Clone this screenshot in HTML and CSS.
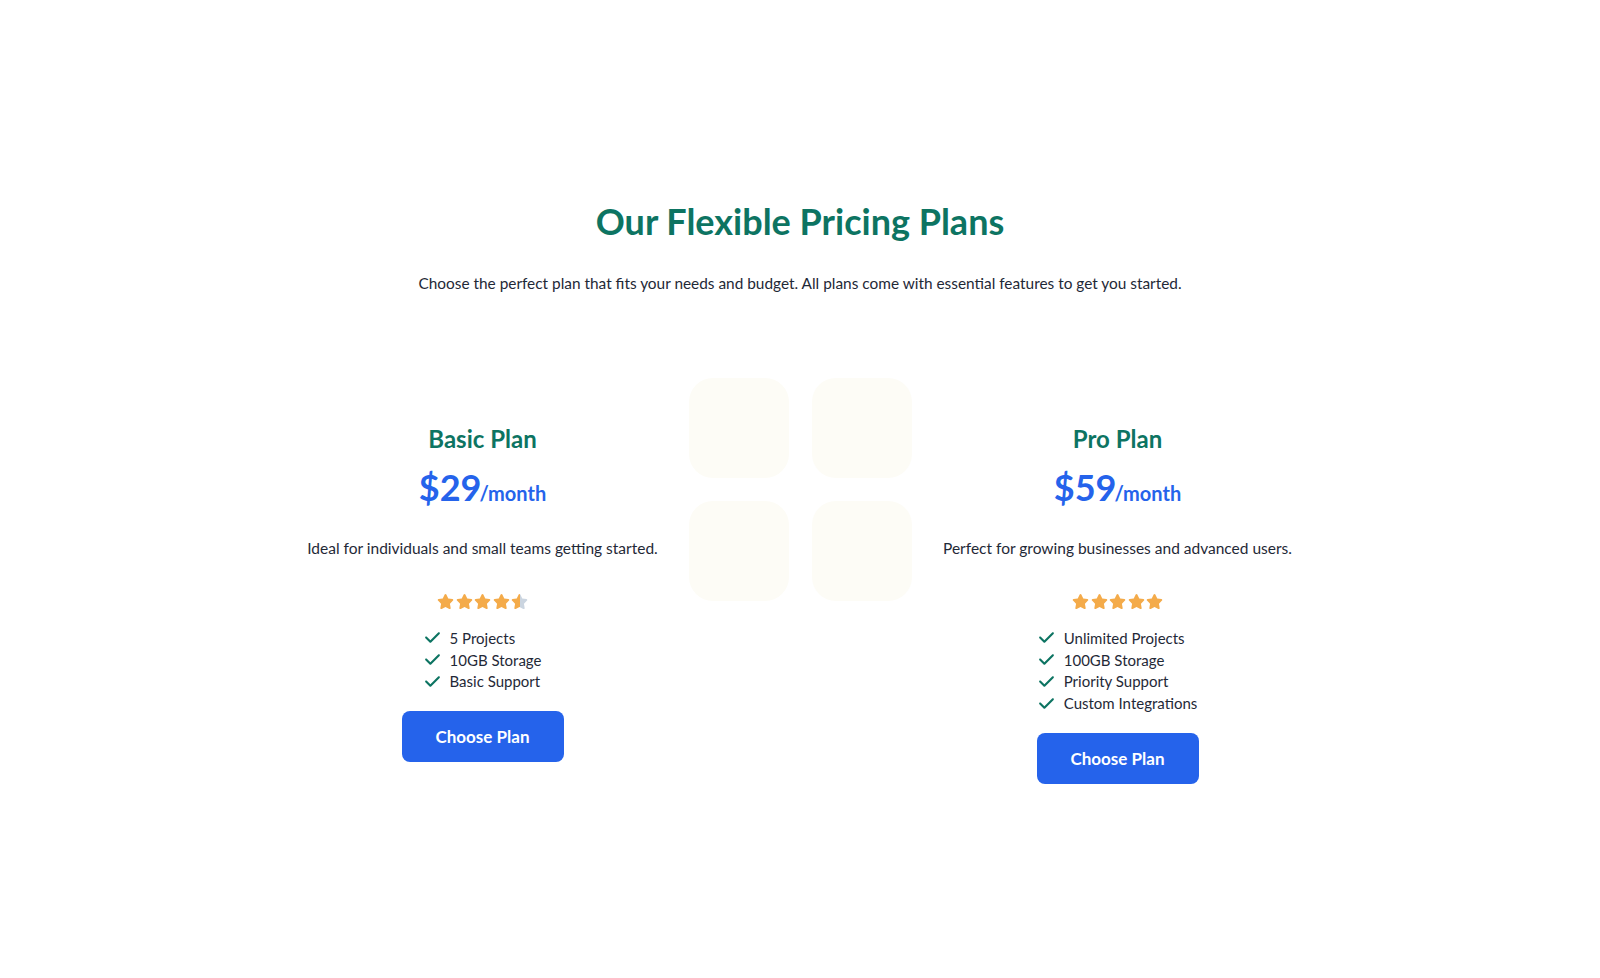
FILE: index.html
```html
<!DOCTYPE html>
<html lang="en">
<head>
<meta charset="utf-8">
<title>Pricing Plans</title>
<link rel="stylesheet" href="styles.css">
</head>
<body>
<section class="pricing">
  <h1 class="pricing-title">Our Flexible Pricing Plans</h1>
  <p class="pricing-sub">Choose the perfect plan that fits your needs and budget. All plans come with essential features to get you started.</p>
  <div class="plans">
    <div class="plan">
      <h2 class="plan-name">Basic Plan</h2>
      <div class="plan-price"><span class="amount">$29</span><span class="period">/month</span></div>
      <p class="plan-desc">Ideal for individuals and small teams getting started.</p>
      <div class="stars">
        <svg class="star" viewBox="0 0 576 512"><path d="M316.9 18C311.6 7 300.4 0 288.1 0s-23.4 7-28.8 18L195 150.3 51.4 171.5c-12 1.8-22 10.2-25.7 21.7s-.7 24.200 7.9 32.7L137.8 329 113.2 474.7c-2 12 3 24.2 12.9 31.3s23 8 33.8 2.3l128.3-68.5 128.3 68.5c10.8 5.7 23.9 4.9 33.8-2.3s14.9-19.3 12.9-31.3L438.5 329 542.7 225.9c8.6-8.5 11.7-21.2 7.9-32.7s-13.7-19.9-25.7-21.7L381.2 150.3 316.9 18z"/></svg>
        <svg class="star" viewBox="0 0 576 512"><path d="M316.9 18C311.6 7 300.4 0 288.1 0s-23.4 7-28.8 18L195 150.3 51.4 171.5c-12 1.8-22 10.2-25.7 21.7s-.7 24.200 7.9 32.7L137.8 329 113.2 474.7c-2 12 3 24.2 12.9 31.3s23 8 33.8 2.3l128.3-68.5 128.3 68.5c10.8 5.7 23.9 4.9 33.8-2.3s14.9-19.3 12.9-31.3L438.5 329 542.7 225.9c8.6-8.5 11.7-21.2 7.9-32.7s-13.7-19.9-25.7-21.7L381.2 150.3 316.9 18z"/></svg>
        <svg class="star" viewBox="0 0 576 512"><path d="M316.9 18C311.6 7 300.4 0 288.1 0s-23.4 7-28.8 18L195 150.3 51.4 171.5c-12 1.8-22 10.2-25.7 21.7s-.7 24.200 7.9 32.7L137.8 329 113.2 474.7c-2 12 3 24.2 12.9 31.3s23 8 33.8 2.3l128.3-68.5 128.3 68.5c10.8 5.7 23.9 4.9 33.8-2.3s14.9-19.3 12.9-31.3L438.5 329 542.7 225.9c8.6-8.5 11.7-21.2 7.9-32.7s-13.7-19.9-25.7-21.7L381.2 150.3 316.9 18z"/></svg>
        <svg class="star" viewBox="0 0 576 512"><path d="M316.9 18C311.6 7 300.4 0 288.1 0s-23.4 7-28.8 18L195 150.3 51.4 171.5c-12 1.8-22 10.2-25.7 21.7s-.7 24.200 7.9 32.7L137.8 329 113.2 474.7c-2 12 3 24.2 12.9 31.3s23 8 33.8 2.3l128.3-68.5 128.3 68.5c10.8 5.7 23.9 4.9 33.8-2.3s14.9-19.3 12.9-31.3L438.5 329 542.7 225.9c8.6-8.5 11.7-21.2 7.9-32.7s-13.7-19.9-25.7-21.7L381.2 150.3 316.9 18z"/></svg>
        <svg class="star" viewBox="0 0 576 512"><defs><linearGradient id="halfgrad" x1="0" y1="0" x2="1" y2="0"><stop offset="50%" stop-color="#f4ab4a"/><stop offset="50%" stop-color="#cbd5e0"/></linearGradient></defs><path fill="url(#halfgrad)" d="M316.9 18C311.6 7 300.4 0 288.1 0s-23.4 7-28.8 18L195 150.3 51.4 171.5c-12 1.8-22 10.2-25.7 21.7s-.7 24.200 7.9 32.7L137.8 329 113.2 474.7c-2 12 3 24.2 12.9 31.3s23 8 33.8 2.3l128.3-68.5 128.3 68.5c10.8 5.7 23.9 4.9 33.8-2.3s14.9-19.3 12.9-31.3L438.5 329 542.7 225.9c8.6-8.5 11.7-21.2 7.9-32.7s-13.7-19.9-25.7-21.7L381.2 150.3 316.9 18z"/></svg>
      </div>
      <ul class="features">
        <li><svg class="check" viewBox="0 0 448 512"><path d="M438.6 105.4c12.5 12.5 12.5 32.8 0 45.3l-256 256c-12.5 12.5-32.8 12.5-45.3 0l-128-128c-12.5-12.5-12.5-32.8 0-45.3s32.8-12.5 45.3 0L160 338.7 393.4 105.4c12.5-12.5 32.8-12.5 45.3 0z"/></svg>5 Projects</li>
        <li><svg class="check" viewBox="0 0 448 512"><path d="M438.6 105.4c12.5 12.5 12.5 32.8 0 45.3l-256 256c-12.5 12.5-32.8 12.5-45.3 0l-128-128c-12.5-12.5-12.5-32.8 0-45.3s32.8-12.5 45.3 0L160 338.7 393.4 105.4c12.5-12.5 32.8-12.5 45.3 0z"/></svg>10GB Storage</li>
        <li><svg class="check" viewBox="0 0 448 512"><path d="M438.6 105.4c12.5 12.5 12.5 32.8 0 45.3l-256 256c-12.5 12.5-32.8 12.5-45.3 0l-128-128c-12.5-12.5-12.5-32.8 0-45.3s32.8-12.5 45.3 0L160 338.7 393.4 105.4c12.5-12.5 32.8-12.5 45.3 0z"/></svg>Basic Support</li>
      </ul>
      <button class="btn">Choose Plan</button>
    </div>

    <div class="grid-icon" aria-hidden="true">
      <span></span><span></span><span></span><span></span>
    </div>

    <div class="plan">
      <h2 class="plan-name">Pro Plan</h2>
      <div class="plan-price"><span class="amount">$59</span><span class="period">/month</span></div>
      <p class="plan-desc">Perfect for growing businesses and advanced users.</p>
      <div class="stars">
        <svg class="star" viewBox="0 0 576 512"><path d="M316.9 18C311.6 7 300.4 0 288.1 0s-23.4 7-28.8 18L195 150.3 51.4 171.5c-12 1.8-22 10.2-25.7 21.7s-.7 24.200 7.9 32.7L137.8 329 113.2 474.7c-2 12 3 24.2 12.9 31.3s23 8 33.8 2.3l128.3-68.5 128.3 68.5c10.8 5.7 23.9 4.9 33.8-2.3s14.9-19.3 12.9-31.3L438.5 329 542.7 225.9c8.6-8.5 11.7-21.2 7.9-32.7s-13.7-19.9-25.7-21.7L381.2 150.3 316.9 18z"/></svg>
        <svg class="star" viewBox="0 0 576 512"><path d="M316.9 18C311.6 7 300.4 0 288.1 0s-23.4 7-28.8 18L195 150.3 51.4 171.5c-12 1.8-22 10.2-25.7 21.7s-.7 24.200 7.9 32.7L137.8 329 113.2 474.7c-2 12 3 24.2 12.9 31.3s23 8 33.8 2.3l128.3-68.5 128.3 68.5c10.8 5.7 23.9 4.9 33.8-2.3s14.9-19.3 12.9-31.3L438.5 329 542.7 225.9c8.6-8.5 11.7-21.2 7.9-32.7s-13.7-19.9-25.7-21.7L381.2 150.3 316.9 18z"/></svg>
        <svg class="star" viewBox="0 0 576 512"><path d="M316.9 18C311.6 7 300.4 0 288.1 0s-23.4 7-28.8 18L195 150.3 51.4 171.5c-12 1.8-22 10.2-25.7 21.7s-.7 24.200 7.9 32.7L137.8 329 113.2 474.7c-2 12 3 24.2 12.9 31.3s23 8 33.8 2.3l128.3-68.5 128.3 68.5c10.8 5.7 23.9 4.9 33.8-2.3s14.9-19.3 12.9-31.3L438.5 329 542.7 225.9c8.6-8.5 11.7-21.2 7.9-32.7s-13.7-19.9-25.7-21.7L381.2 150.3 316.9 18z"/></svg>
        <svg class="star" viewBox="0 0 576 512"><path d="M316.9 18C311.6 7 300.4 0 288.1 0s-23.4 7-28.8 18L195 150.3 51.4 171.5c-12 1.8-22 10.2-25.7 21.7s-.7 24.200 7.9 32.7L137.8 329 113.2 474.7c-2 12 3 24.2 12.9 31.3s23 8 33.8 2.3l128.3-68.5 128.3 68.5c10.8 5.7 23.9 4.9 33.8-2.3s14.9-19.3 12.9-31.3L438.5 329 542.7 225.9c8.6-8.5 11.7-21.2 7.9-32.7s-13.7-19.9-25.7-21.7L381.2 150.3 316.9 18z"/></svg>
        <svg class="star" viewBox="0 0 576 512"><path d="M316.9 18C311.6 7 300.4 0 288.1 0s-23.4 7-28.8 18L195 150.3 51.4 171.5c-12 1.8-22 10.2-25.7 21.7s-.7 24.200 7.9 32.7L137.8 329 113.2 474.7c-2 12 3 24.2 12.9 31.3s23 8 33.8 2.3l128.3-68.5 128.3 68.5c10.8 5.7 23.9 4.9 33.8-2.3s14.9-19.3 12.9-31.3L438.5 329 542.7 225.9c8.6-8.5 11.7-21.2 7.9-32.7s-13.7-19.9-25.7-21.7L381.2 150.3 316.9 18z"/></svg>
      </div>
      <ul class="features">
        <li><svg class="check" viewBox="0 0 448 512"><path d="M438.6 105.4c12.5 12.5 12.5 32.8 0 45.3l-256 256c-12.5 12.5-32.8 12.5-45.3 0l-128-128c-12.5-12.5-12.5-32.8 0-45.3s32.8-12.5 45.3 0L160 338.7 393.4 105.4c12.5-12.5 32.8-12.5 45.3 0z"/></svg>Unlimited Projects</li>
        <li><svg class="check" viewBox="0 0 448 512"><path d="M438.6 105.4c12.5 12.5 12.5 32.8 0 45.3l-256 256c-12.5 12.5-32.8 12.5-45.3 0l-128-128c-12.5-12.5-12.5-32.8 0-45.3s32.8-12.5 45.3 0L160 338.7 393.4 105.4c12.5-12.5 32.8-12.5 45.3 0z"/></svg>100GB Storage</li>
        <li><svg class="check" viewBox="0 0 448 512"><path d="M438.6 105.4c12.5 12.5 12.5 32.8 0 45.3l-256 256c-12.5 12.5-32.8 12.5-45.3 0l-128-128c-12.5-12.5-12.5-32.8 0-45.3s32.8-12.5 45.3 0L160 338.7 393.4 105.4c12.5-12.5 32.8-12.5 45.3 0z"/></svg>Priority Support</li>
        <li><svg class="check" viewBox="0 0 448 512"><path d="M438.6 105.4c12.5 12.5 12.5 32.8 0 45.3l-256 256c-12.5 12.5-32.8 12.5-45.3 0l-128-128c-12.5-12.5-12.5-32.8 0-45.3s32.8-12.5 45.3 0L160 338.7 393.4 105.4c12.5-12.5 32.8-12.5 45.3 0z"/></svg>Custom Integrations</li>
      </ul>
      <button class="btn">Choose Plan</button>
    </div>
  </div>
</section>
</body>
</html>
```

FILE: styles.css
```css
* { box-sizing: border-box; }

html, body {
  margin: 0;
  padding: 0;
  background: #ffffff;
}

body {
  font-family: "Lato", "Noto Sans", "Liberation Sans", sans-serif;
  color: #1f2937;
}

.pricing {
  padding-top: 200px;
  text-align: center;
}

.pricing-title {
  margin: 0;
  font-size: 36px;
  line-height: 43px;
  font-weight: 700;
  color: #0d7462;
}

.pricing-sub {
  margin: 28px 0 0;
  font-size: 15.4px;
  line-height: 24px;
  color: #1f2937;
}

.plans {
  margin-top: 83px;
  display: flex;
  justify-content: center;
  align-items: flex-start;
  gap: 20px;
}

.plan {
  width: 372px;
  padding-top: 45px;
  display: flex;
  flex-direction: column;
  align-items: center;
}

.plan-name {
  margin: 0;
  font-size: 24px;
  line-height: 32px;
  font-weight: 700;
  color: #0d7462;
}

.plan-price {
  margin-top: 10px;
  height: 44px;
  line-height: 44px;
  color: #2563eb;
  font-weight: 700;
}

.plan-price .amount {
  font-size: 36px;
}

.plan-price .period {
  font-size: 20px;
  margin-left: -2px;
}

.plan-desc {
  margin: 27px 0 0;
  font-size: 15.5px;
  line-height: 24px;
  white-space: nowrap;
}

.stars {
  margin-top: 33px;
  display: flex;
  gap: 1.5px;
  height: 17px;
}

.star {
  width: 17px;
  height: 17px;
  fill: #f4ab4a;
  display: block;
}

.features {
  margin: 17px 0 0;
  padding: 0;
  list-style: none;
  text-align: left;
}

.features li {
  display: flex;
  align-items: center;
  height: 21.8px;
  font-size: 15px;
  color: #1f2937;
}

.check {
  width: 17px;
  height: 17px;
  fill: #0d7462;
  margin-right: 9px;
  flex: none;
}

.btn {
  margin-top: 19px;
  width: 162px;
  height: 51px;
  border: none;
  border-radius: 8px;
  background: #2563eb;
  color: #ffffff;
  font-family: inherit;
  font-size: 17px;
  font-weight: 700;
  cursor: pointer;
}

.grid-icon {
  width: 223px;
  height: 223px;
  display: grid;
  grid-template-columns: 100px 100px;
  grid-template-rows: 100px 100px;
  gap: 23px;
  flex: none;
}

.grid-icon span {
  background: #fdfcf6;
  border-radius: 24px;
}
```
